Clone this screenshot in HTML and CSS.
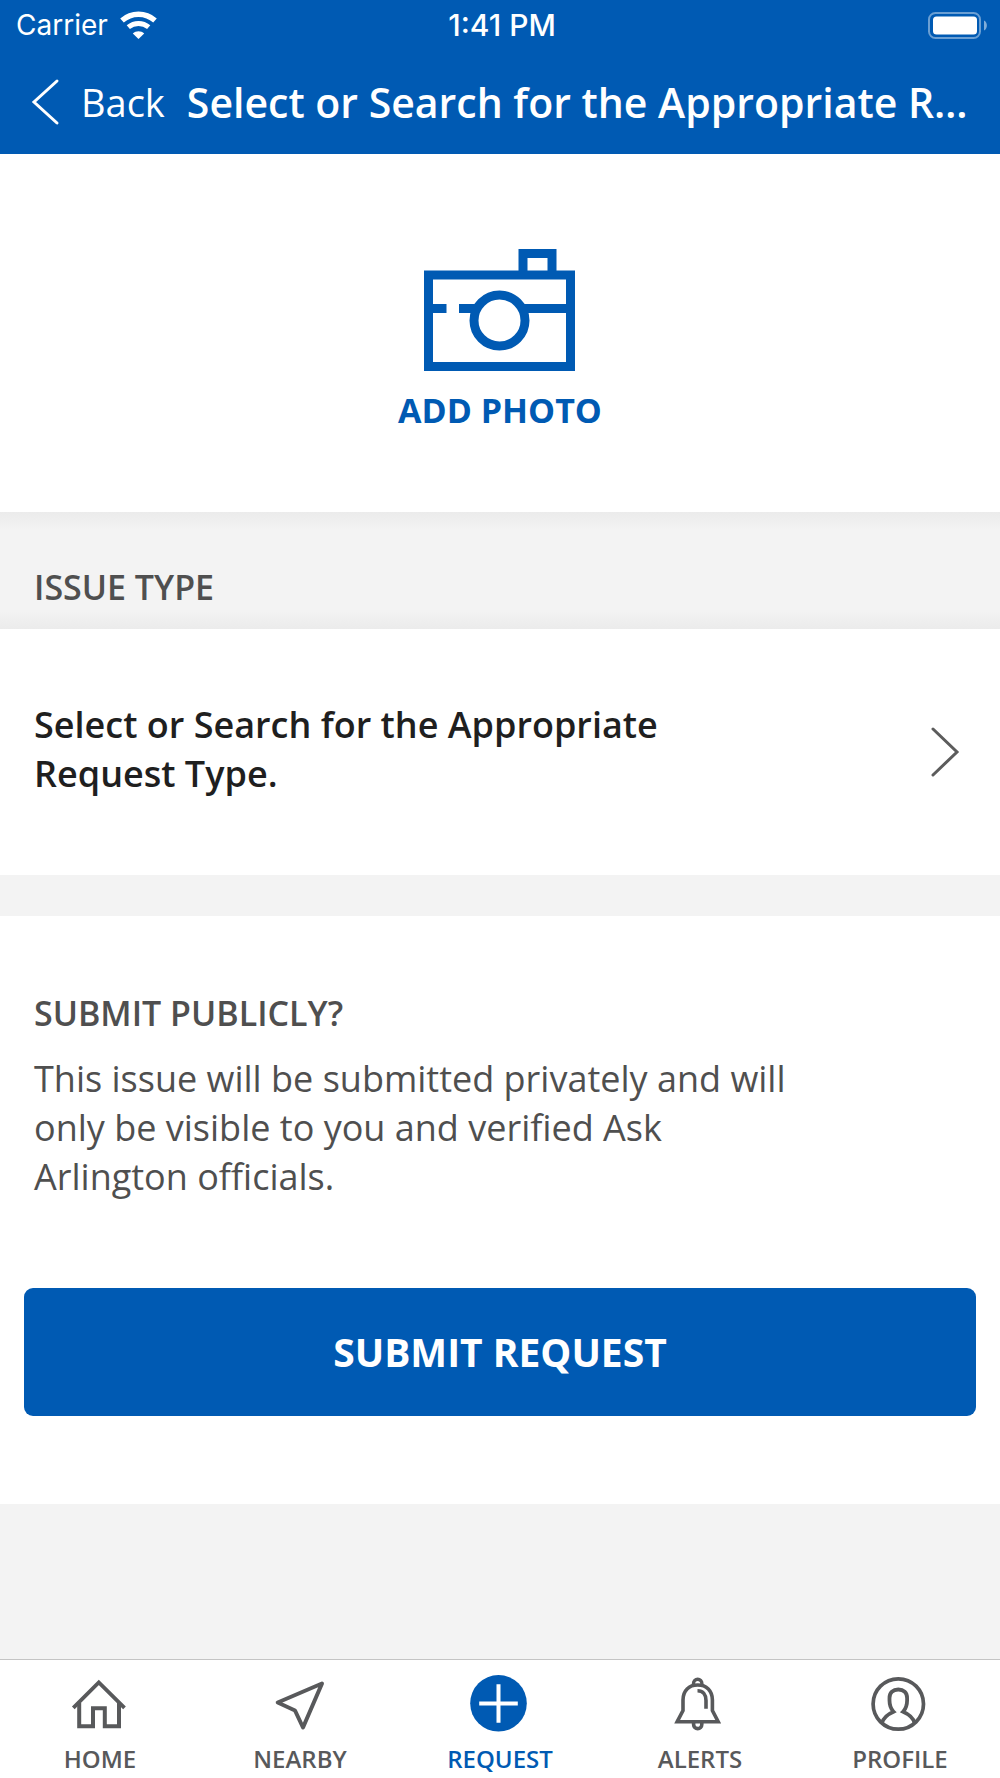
FILE: index.html
```html
<!DOCTYPE html>
<html lang="en">
<head>
<meta charset="utf-8">
<meta name="viewport" content="width=device-width, initial-scale=1">
<title>New Request</title>
<link rel="stylesheet" href="styles.css">
</head>
<body>
<div class="app">
  <header class="top">
    <div class="status">
      <div class="status-left">
        <span class="carrier">Carrier</span>
        <svg class="wifi" viewBox="0 0 37 27" aria-hidden="true">
          <g fill="none" stroke="#fff">
            <path d="M2 8.500C11.500 0.200 25.500 0.200 35 8.500" stroke-width="5.400"/>
            <path d="M8.300 15.200C14.300 10.200 22.700 10.200 28.700 15.200" stroke-width="5"/>
          </g>
          <path d="M18.500 27L12.800 21.600C16 18.400 21 18.400 24.200 21.600Z" fill="#fff"/>
        </svg>
      </div>
      <span class="time">1:41 PM</span>
      <svg class="battery" viewBox="0 0 60 27" aria-hidden="true">
        <rect x="1" y="1" width="51" height="25" rx="6.500" fill="none" stroke="#fff" stroke-opacity=".42" stroke-width="2"/>
        <rect x="5" y="4.500" width="44" height="18" rx="3.500" fill="#fff"/>
        <path d="M56 8.500C59.800 10 59.800 17 56 18.500Z" fill="#fff" fill-opacity=".5"/>
      </svg>
    </div>
    <div class="titlebar">
      <a class="back" href="#">
        <svg class="back-icon" viewBox="0 0 27 46" aria-hidden="true"><path d="M25 2L2 23L25 44" fill="none" stroke="#fff" stroke-width="3" stroke-linecap="round"/></svg>
        Back
      </a>
      <h1 class="title">Select or Search for the Appropriate Request Type.</h1>
    </div>
  </header>

  <main class="content">
    <button class="photo" type="button">
      <svg class="camera" viewBox="0 0 152 122" aria-hidden="true">
        <g fill="none" stroke="#005ab3" stroke-width="9">
          <rect x="4.500" y="26" width="142" height="91.500"/>
          <path d="M99 26V4.500H128V26"/>
          <path d="M4 59.500H22.500M35 59.500H54M97 59.500H146"/>
          <circle cx="75.500" cy="71.500" r="25.500"/>
        </g>
      </svg>
      <span>ADD PHOTO</span>
    </button>

    <h2 class="label issue-label">ISSUE TYPE</h2>

    <a class="issue" href="#">
      <span class="issue-text">Select or Search for the Appropriate Request Type.</span>
      <svg class="chevron" viewBox="0 0 28 50" aria-hidden="true"><path d="M2 2L26 25L2 48" fill="none" stroke="#5c5c5c" stroke-width="3" stroke-linecap="round"/></svg>
    </a>

    <section class="submit">
      <h2 class="label">SUBMIT PUBLICLY?</h2>
      <p class="note">This issue will be submitted privately and will only be visible to you and verified Ask Arlington officials.</p>
      <button class="submit-button" type="button">SUBMIT REQUEST</button>
    </section>
  </main>

  <nav class="tabs" aria-label="Main">
    <a class="tab" href="#">
      <svg class="tab-icon" viewBox="0 0 56 56" aria-hidden="true">
        <path d="M1.300 32.800L26.800 7.500L52.500 32.800" stroke-width="3.800"/>
        <path d="M7.200 28V51.200H21V33.200H32.800V51.200H47V28" stroke-width="4"/>
      </svg>
      HOME
    </a>
    <a class="tab" href="#">
      <svg class="tab-icon" viewBox="0 0 56 56" aria-hidden="true">
        <path d="M50 8.500L5.700 27.500L23 35.500L31 52.500Z" stroke-width="4" stroke-linejoin="round"/>
      </svg>
      NEARBY
    </a>
    <a class="tab tab-active" href="#" aria-current="page">
      <svg class="tab-icon" viewBox="0 0 56 56" aria-hidden="true">
        <circle cx="26.500" cy="28.300" r="28.300" fill="#005ab3" stroke="none"/>
        <path d="M7.200 28.500H45.800M26.500 9.200V47.800" stroke="#fff" stroke-width="4"/>
      </svg>
      REQUEST
    </a>
    <a class="tab" href="#">
      <svg class="tab-icon" viewBox="0 0 56 56" aria-hidden="true">
        <path d="M5.200 46.700L11 35.500V25C11 15.500 17 10 25.700 10S40.400 15.500 40.400 25V35.500L46.200 46.700Z" stroke-width="3.600"/>
        <path d="M21.500 10.500V8.500A4.200 4.200 0 0 1 29.900 8.500V10.500" stroke-width="3.400"/>
        <path d="M21.600 47.500V49.500A4.100 4.100 0 0 0 29.800 49.500V47.500" stroke-width="3.600"/>
        <path d="M25.500 15.800C31 15.800 34 19.500 34 25.500V33.700" stroke-width="3.600"/>
      </svg>
      ALERTS
    </a>
    <a class="tab" href="#">
      <svg class="tab-icon" viewBox="0 0 56 56" aria-hidden="true">
        <circle cx="26.300" cy="29" r="25.200" stroke-width="3.700"/>
        <path d="M10 48C11.500 42.500 15 39.500 21.500 36.700C18.500 33.500 17.500 30 17.500 25.500V23C17.500 17.500 21 14.500 26.300 14.500S35.100 17.500 35.100 23V25.500C35.100 30 34.100 33.500 31.100 36.700C37.600 39.500 41.100 42.500 42.600 48" stroke-width="3.800"/>
      </svg>
      PROFILE
    </a>
  </nav>
</div>
</body>
</html>
```
FILE: styles.css
```css
* {
  box-sizing: border-box;
}

body,
h1,
h2,
p {
  margin: 0;
}

body {
  font-family: "Open Sans", "Noto Sans", sans-serif;
  background: #f3f3f3;
  color: #4f4f4f;
}

a {
  color: inherit;
  text-decoration: none;
}

button {
  border: 0;
  font-family: inherit;
  cursor: pointer;
}

svg {
  display: block;
  flex: none;
  overflow: visible;
}

.app {
  display: flex;
  flex-direction: column;
  min-height: 100vh;
}

.top {
  background: #005ab3;
  color: #fff;
}

.status {
  display: grid;
  grid-template-columns: 1fr auto 1fr;
  align-items: center;
  padding: 8px 12px 8px 16px;
  font: 400 28px/34px Inter, sans-serif;
}

.status-left {
  display: flex;
  align-items: center;
  gap: 12px;
}

.wifi {
  width: 37px;
  height: 27px;
}

.time {
  font-size: 30px;
  font-weight: 500;
}

.battery {
  width: 60px;
  height: 27px;
  justify-self: end;
}

.titlebar {
  display: flex;
  align-items: center;
  gap: 22px;
  padding: 24px 24px 24px 32px;
  line-height: 56px;
}

.back {
  display: flex;
  align-items: center;
  gap: 22px;
  font-size: 38px;
}

.back-icon {
  width: 27px;
  height: 46px;
}

.title {
  flex: 1;
  min-width: 0;
  overflow: hidden;
  text-overflow: ellipsis;
  white-space: nowrap;
  font-size: 41px;
  font-weight: 600;
}

.content {
  flex: 1;
}

.photo {
  display: flex;
  flex-direction: column;
  align-items: center;
  gap: 16px;
  width: 100%;
  padding: 95px 32px 79px;
  background: #fff;
  color: #005ab3;
  font-size: 34px;
  font-weight: 700;
  line-height: 46px;
}

.camera {
  width: 152px;
  height: 122px;
}

.label {
  font-size: 34px;
  font-weight: 600;
  line-height: 46px;
}

.issue-label {
  padding: 52px 34px 19px;
  background: linear-gradient(#ebebeb, #f3f3f3 18px, #f3f3f3 calc(100% - 18px), #ebebeb);
}

.issue {
  display: flex;
  align-items: center;
  justify-content: space-between;
  padding: 71px 41px 71px 34px;
  background: #fff;
  color: #1f1f1f;
  font-size: 36px;
  font-weight: 600;
  line-height: 49px;
}

.issue-text {
  max-width: 720px;
  padding-bottom: 6px;
}

.chevron {
  width: 28px;
  height: 50px;
}

.submit {
  margin-top: 41px;
  padding: 74px 24px 88px;
  background: #fff;
}

.submit .label {
  padding: 0 10px;
}

.note {
  max-width: 800px;
  margin: 18px 0 87px;
  padding: 0 10px;
  font-size: 36px;
  line-height: 49px;
}

.submit-button {
  display: block;
  width: 100%;
  padding: 38px 24px;
  border-radius: 9px;
  background: #005ab3;
  color: #fff;
  font-size: 39px;
  font-weight: 700;
  line-height: 52px;
}

.tabs {
  display: grid;
  grid-template-columns: repeat(5, 1fr);
  padding: 15px 0 3px;
  border-top: 1px solid #c4c4c4;
  background: #fff;
}

.tab {
  display: flex;
  flex-direction: column;
  align-items: center;
  gap: 12px;
  color: #58595b;
  font-size: 24px;
  font-weight: 600;
  line-height: 32px;
}

.tab-active {
  color: #005ab3;
}

.tab-icon {
  width: 56px;
  height: 56px;
  fill: none;
  stroke: #58595b;
}
```
